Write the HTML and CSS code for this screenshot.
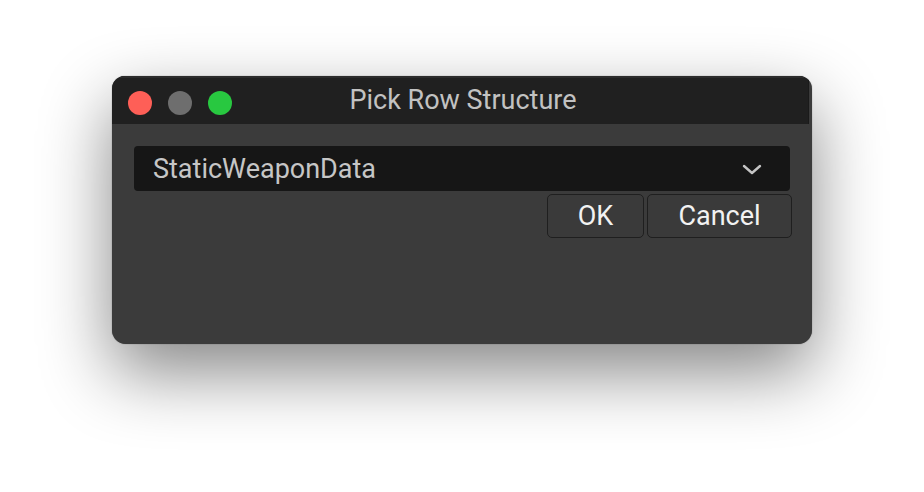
FILE: index.html
```html
<!DOCTYPE html>
<html>
<head>
<meta charset="utf-8">
<link rel="stylesheet" href="styles.css">
</head>
<body>
<div class="stage">
  <div class="window">
    <div class="titlebar">
      <div class="lights">
        <span class="light red"></span>
        <span class="light gray"></span>
        <span class="light green"></span>
      </div>
      <div class="title">Pick Row Structure</div>
    </div>
    <div class="content">
      <div class="combo">
        <span class="combo-text">StaticWeaponData</span>
        <svg class="chev" width="20" height="11" viewBox="0 0 20 11"><path d="M2 2 L10 9 L18 2" fill="none" stroke="#c4c4c4" stroke-width="2.4" stroke-linecap="round" stroke-linejoin="round"/></svg>
      </div>
      <div class="buttons">
        <button class="btn ok">OK</button>
        <button class="btn cancel">Cancel</button>
      </div>
    </div>
  </div>
</div>
</body>
</html>
```
FILE: styles.css
```css
html, body {
  margin: 0;
  padding: 0;
  background: #ffffff;
  width: 924px;
  height: 492px;
  overflow: hidden;
}
.stage {
  padding: 76px 0 0 112px;
}
.window {
  width: 700px;
  height: 268px;
  border-radius: 13px 13px 14px 14px;
  background: #3b3b3b;
  box-shadow: 0 28px 70px rgba(0, 0, 0, 0.48), 0 0 1px rgba(0,0,0,0.6);
  overflow: hidden;
  display: flex;
  flex-direction: column;
  font-family: Roboto, "Liberation Sans", sans-serif;
}
.titlebar {
  height: 46px;
  background: #202020;
  border-top: 2px solid #2c2c2c;
  display: flex;
  align-items: center;
  position: relative;
  margin-right: 3px;
  border-right: 1px solid #1a1a1a;
}
.lights {
  display: flex;
  gap: 16px;
  padding-left: 16px;
  margin-top: 3px;
}
.light {
  width: 24px;
  height: 24px;
  border-radius: 50%;
  display: block;
}
.red { background: #fe5f57; }
.gray { background: #6e6e6e; }
.green { background: #28c840; }
.title {
  position: absolute;
  left: 0;
  right: 0;
  top: 6px;
  text-align: center;
  color: #c2c2c2;
  font-size: 27px;
  padding-left: 6px;
}
.content {
  flex: 1;
  padding: 22px 20px 0 22px;
  display: flex;
  flex-direction: column;
}
.combo {
  height: 45px;
  background: #161616;
  border-radius: 4px;
  display: flex;
  align-items: center;
  justify-content: space-between;
  padding: 0 28px 0 19px;
  margin-right: 2px;
}
.combo-text {
  color: #c6c6c6;
  font-size: 27px;
}
.chev {
  display: block;
  margin-top: 2px;
}
.buttons {
  display: flex;
  justify-content: flex-end;
  gap: 3px;
  margin-top: 3px;
}
.btn {
  height: 44px;
  background: #3a3a3a;
  border: 1px solid #1f1f1f;
  border-radius: 5px;
  color: #f2f2f2;
  font-family: Roboto, "Liberation Sans", sans-serif;
  font-size: 27px;
  padding: 0;
  margin: 0;
}
.ok { width: 97px; }
.cancel { width: 145px; }
```
